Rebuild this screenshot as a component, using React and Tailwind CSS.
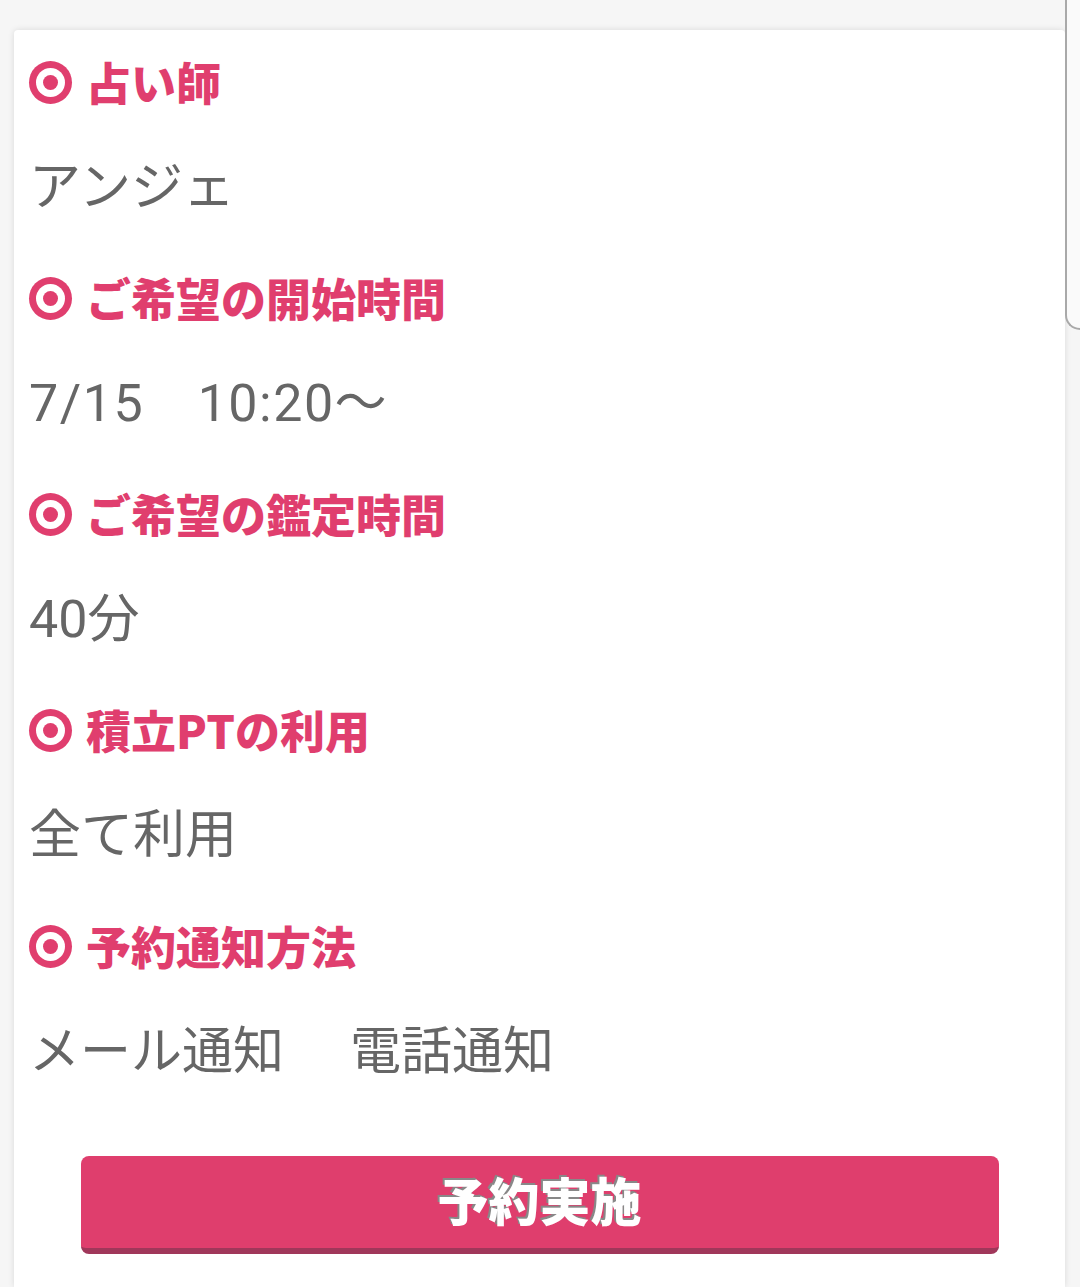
import React from "react";

const items = [
  { label: "占い師", value: "アンジェ" },
  { label: "ご希望の開始時間", value: "7/15　10:20～", wide: true },
  { label: "ご希望の鑑定時間", value: "40分" },
  { label: "積立PTの利用", value: "全て利用" },
];

function Target() {
  return (
    <span className="flex h-[43px] w-[43px] shrink-0 items-center justify-center rounded-full bg-[#e03e6e]">
      <span className="flex h-[29px] w-[29px] items-center justify-center rounded-full bg-white">
        <span className="h-[15px] w-[15px] rounded-full bg-[#e03e6e]" />
      </span>
    </span>
  );
}

function Heading({ children }) {
  return (
    <div className="flex h-[60px] items-center gap-[14px] pl-[15px]">
      <Target />
      <span className="font-['Noto_Sans_CJK_JP',sans-serif] text-[45px] font-black leading-[60px] text-[#e03e6e]">
        {children}
      </span>
    </div>
  );
}

function Value({ children, wide }) {
  return (
    <div
      className={
        wide
          ? "mt-[46px] h-[60px] pl-[15px] font-['Roboto','Noto_Sans_CJK_JP',sans-serif] text-[52px] leading-[60px] tracking-[1.5px] text-[#666666] whitespace-pre"
          : "mt-[46px] h-[60px] pl-[15px] font-['Roboto','Noto_Sans_CJK_JP',sans-serif] text-[52px] leading-[60px] text-[#666666] whitespace-pre"
      }
    >
      {children}
    </div>
  );
}

export default function App() {
  return (
    <div className="flex min-h-[1287px] w-[1080px] overflow-hidden bg-[#f6f6f6] pl-[14px]">
      <div className="mt-[30px] w-[1051px] shrink-0 rounded-t-[4px] bg-white pt-[22px] shadow-[0_0_6px_rgba(0,0,0,0.12)]">
        {items.map((it, i) => (
          <div key={i} className={i === 0 ? "" : "mt-[50px]"}>
            <Heading>{it.label}</Heading>
            <Value wide={it.wide}>{it.value}</Value>
          </div>
        ))}
        <div className="mt-[50px]">
          <Heading>予約通知方法</Heading>
          <div className="mt-[46px] flex h-[60px] gap-[66px] pl-[15px] font-['Roboto','Noto_Sans_CJK_JP',sans-serif] text-[51px] leading-[60px] text-[#666666]">
            <span>メール通知</span>
            <span>電話通知</span>
          </div>
        </div>
        <div className="mt-[74px] flex justify-center">
          <button className="flex h-[98px] w-[918px] items-center justify-center rounded-[8px] border-b-[6px] border-[#a0375a] bg-[#df3e6d] pb-[6px] font-['Noto_Sans_CJK_JP',sans-serif] text-[51px] font-black leading-none text-white [text-shadow:-2px_-2px_0_#888888]">
            予約実施
          </button>
        </div>
      </div>
      <div className="h-[330px] flex-1 rounded-bl-[16px] border-b-2 border-l-2 border-[#a9a9a9] bg-[#fafafa]" />
    </div>
  );
}
